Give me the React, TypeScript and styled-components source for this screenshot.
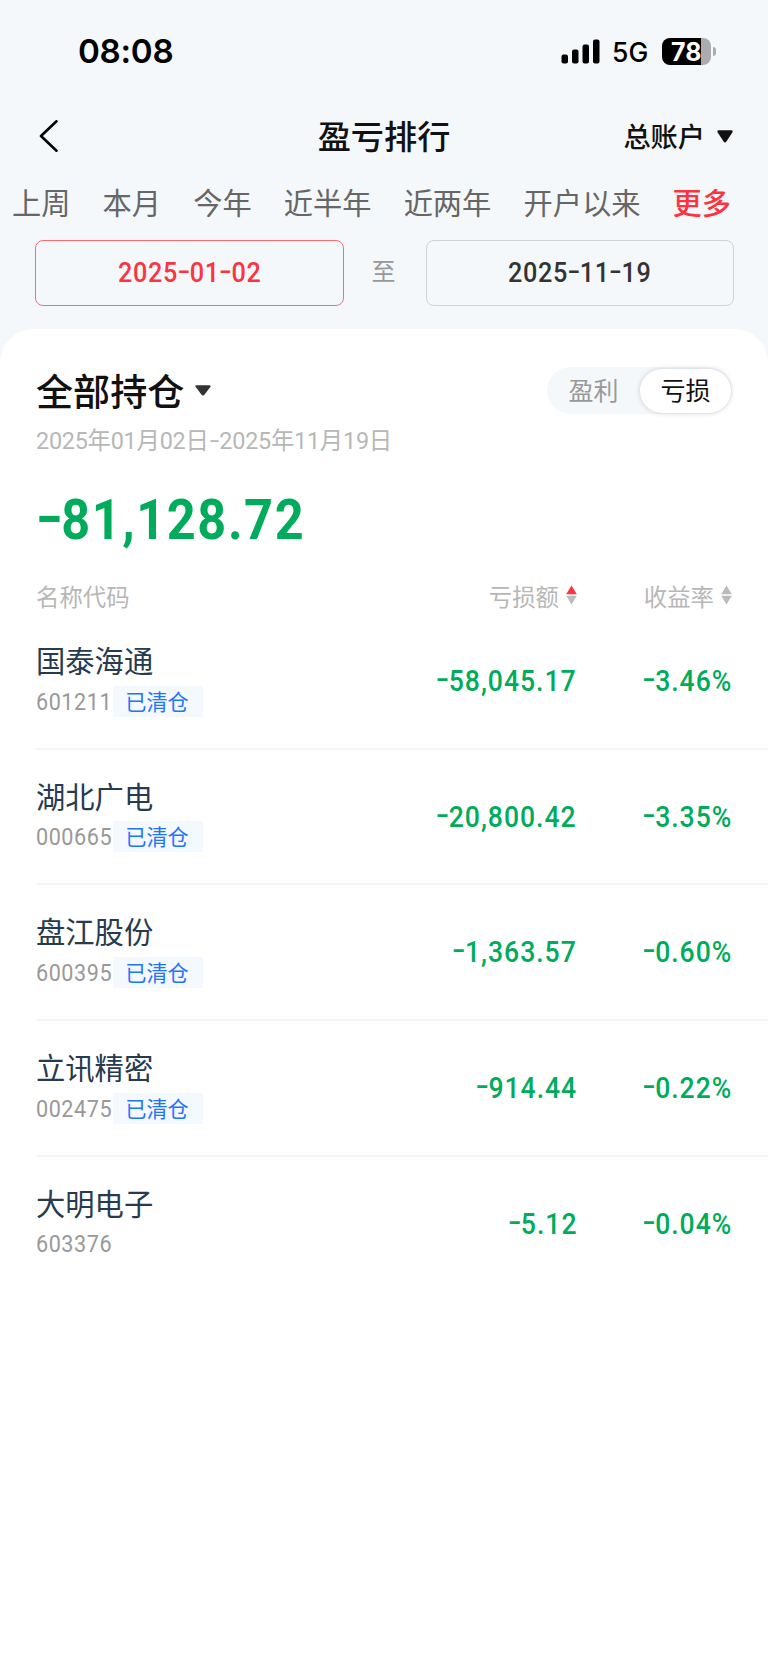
import React from 'react';
import styled, { createGlobalStyle } from 'styled-components';

const GlobalStyle = createGlobalStyle`
  *, *::before, *::after { box-sizing: border-box; }
  html, body { margin: 0; padding: 0; background: #fff; }
  body { font-family: Roboto, "Noto Sans CJK SC", sans-serif; color: #111; }
`;

const cjk = '"Noto Sans CJK SC", sans-serif';

const Screen = styled.div`
  width: 768px;
  height: 1663px;
  overflow: hidden;
  display: flex;
  flex-direction: column;
  background: #f4f8fb;
`;

const StatusBar = styled.div`
  height: 102px;
  padding: 0 52px 0 78px;
  display: flex;
  align-items: center;
  justify-content: space-between;
  font-family: Inter, sans-serif;
  color: #000;
`;

const Clock = styled.span`
  font-size: 33.2px;
  font-weight: 600;
  line-height: 40px;
  letter-spacing: -0.3px;
`;

const StatusIcons = styled.div`
  display: flex;
  align-items: center;
`;

const Network = styled.span`
  margin: 2px 0 0 12px;
  width: 50px;
  font-size: 26.5px;
  font-weight: 500;
  line-height: 30px;
`;

const Battery = styled.div`
  display: flex;
  align-items: center;
  gap: 2px;
`;

const BatteryBody = styled.div`
  width: 49px;
  height: 27px;
  border-radius: 8px;
  background: linear-gradient(to right, #000 39px, #acacae 39px);
  color: #fff;
  font-size: 25px;
  font-weight: 700;
  line-height: 28px;
  padding-left: 9px;
`;

const BatteryTip = styled.div`
  width: 3px;
  height: 9px;
  border-radius: 0 4px 4px 0;
  background: #acacae;
`;

const NavBar = styled.header`
  height: 68px;
  display: grid;
  grid-template-columns: 1fr auto 1fr;
  align-items: center;
  padding: 0 35px 0 38px;
  font-family: ${cjk};
`;

const Title = styled.h1`
  margin: 0;
  padding: 0 3px 2px 0;
  font-size: 33.2px;
  line-height: 48px;
  font-weight: 500;
  color: #111;
`;

const Account = styled.div`
  justify-self: end;
  display: flex;
  align-items: center;
  gap: 12px;
  font-size: 27.2px;
  line-height: 38px;
  font-weight: 500;
`;

const AccountLabel = styled.span`
  padding-bottom: 2px;
`;

const Tabs = styled.nav`
  height: 70px;
  padding-left: 12px;
  display: flex;
  gap: 32.1px;
  white-space: nowrap;
  font-family: ${cjk};
`;

const Tab = styled.span<{ $active?: boolean }>`
  font-size: 29.25px;
  line-height: 63px;
  font-weight: ${p => (p.$active ? 500 : 400)};
  color: ${p => (p.$active ? '#fb3440' : '#666')};
`;

const DateRange = styled.div`
  display: grid;
  grid-template-columns: 309px 82px 308px;
  padding-left: 35px;
  height: 89px;
`;

const DateBox = styled.div<{ $active?: boolean }>`
  height: 66px;
  display: flex;
  align-items: center;
  justify-content: center;
  padding-bottom: 2px;
  border: 1px solid ${p => (p.$active ? '#fa6b74' : '#d0d3d6')};
  border-radius: 8px;
  color: ${p => (p.$active ? '#fb3440' : '#333')};
`;

const To = styled.span`
  padding-right: 3px;
  font-family: ${cjk};
  font-size: 24px;
  line-height: 59px;
  text-align: center;
  color: #999;
`;

const NumText = styled.span<{ $size: number; $weight: number; $scale: number; $origin: string; $gap: number }>`
  display: inline-block;
  font-family: Roboto, sans-serif;
  font-size: ${p => p.$size}px;
  font-weight: ${p => p.$weight};
  letter-spacing: ${p => p.$gap}px;
  white-space: nowrap;
  transform: scaleX(${p => p.$scale});
  transform-origin: ${p => p.$origin} center;
`;

const Dash = styled.span`
  display: inline-block;
  width: 0.46em;
  text-align: center;
  letter-spacing: 0;
  transform: translateY(-0.06em) scaleX(1.45);
`;

const Card = styled.main`
  flex: 1;
  background: #fff;
  border-radius: 34px 34px 0 0;
  padding: 38px 0 0 36px;
`;

const CardHead = styled.div`
  display: flex;
  align-items: center;
  justify-content: space-between;
  height: 47px;
  padding-right: 36px;
  font-family: ${cjk};
`;

const Holdings = styled.h2`
  margin: 0;
  display: flex;
  align-items: center;
  gap: 11px;
  font-size: 37.1px;
  line-height: 50px;
  font-weight: 500;
`;

const HoldingsLabel = styled.span`
  padding-bottom: 1px;
`;

const Toggle = styled.div`
  width: 185px;
  height: 47px;
  border-radius: 24px;
  background: #f4f8fb;
  display: flex;
  align-items: center;
`;

const ToggleItem = styled.span<{ $active?: boolean }>`
  width: ${p => (p.$active ? 91 : 93)}px;
  height: 44px;
  border-radius: 22px;
  text-align: center;
  font-size: 25px;
  line-height: 40px;
  color: ${p => (p.$active ? '#111' : '#999')};
  background: ${p => (p.$active ? '#fff' : 'transparent')};
  box-shadow: ${p => (p.$active ? '0 0 5px rgba(60, 70, 80, 0.24)' : 'none')};
`;

const Period = styled.div`
  margin-top: 12px;
  font-size: 23.4px;
  line-height: 31px;
  letter-spacing: -0.25px;
  color: #b7b7b7;
`;

const Total = styled.div`
  margin-top: 23px;
  padding-left: 2px;
  height: 79px;
  line-height: 80px;
  color: #00ac5b;
`;

const columns = 'grid-template-columns: 340px 1fr 155px; display: grid; padding-right: 36px;';

const TableHead = styled.div`
  ${columns}
  height: 37px;
  margin-top: 18px;
  align-items: center;
  font-family: ${cjk};
  font-size: 23.4px;
  line-height: 34px;
  color: #b7b7b7;
`;

const SortHead = styled.div`
  display: flex;
  align-items: center;
  justify-content: flex-end;
  gap: 7px;

  svg { margin-bottom: 2px; }
`;

const Row = styled.div<{ $last?: boolean }>`
  ${columns}
  height: 135.7px;
  align-items: start;
  border-bottom: ${p => (p.$last ? 0 : 2)}px solid #f5f5f6;
`;

const Stock = styled.div`
  padding-top: 25px;
`;

const StockName = styled.div`
  font-family: ${cjk};
  font-size: 29.3px;
  line-height: 40px;
  color: #263a50;
`;

const StockMeta = styled.div`
  display: flex;
  align-items: center;
  height: 32px;
  margin-top: 6px;
  color: #999;
`;

const Code = styled.span`
  width: 77px;
  padding-top: 1px;
`;

const Badge = styled.span`
  width: 90px;
  height: 31px;
  padding-right: 2px;
  background: #f4f8ff;
  color: #2175fb;
  font-family: ${cjk};
  font-size: 21.2px;
  line-height: 29px;
  text-align: center;
`;

const Value = styled.div`
  text-align: right;
  color: #00ac5b;
  line-height: 40px;
  padding-top: 47px;
`;

const Figure = ({ text }: { text: string }) => (
  <>
    {text.split(/(-)/).map((part, i) => (part === '-' ? <Dash key={i}>-</Dash> : part))}
  </>
);

type NumProps = { text: string; size: number; weight?: number; scale?: number; origin?: string; gap?: number };

const Num = ({ text, size, weight = 500, scale = 0.9, origin = 'center', gap = 0 }: NumProps) => (
  <NumText $size={size} $weight={weight} $scale={scale} $origin={origin} $gap={gap}>
    <Figure text={text} />
  </NumText>
);

const Caret = ({ w, h, color }: { w: number; h: number; color: string }) => (
  <svg width={w} height={h} viewBox="0 0 16 12" preserveAspectRatio="none">
    <path d="M1.6 .3H14.4Q16.3 .6 15.3 2.2L9.4 10.7Q8 12.5 6.6 10.7L.7 2.2Q-.3 .6 1.6 .3Z" fill={color} />
  </svg>
);

const Sort = ({ up }: { up: string }) => (
  <svg width="11" height="20" viewBox="0 0 11 20">
    <path d="M5.5 .6L10.8 9.3H.2Z" fill={up} />
    <path d="M5.5 19.4L10.8 10.7H.2Z" fill="#bbb" />
  </svg>
);

const tabs = ['上周', '本月', '今年', '近半年', '近两年', '开户以来', '更多'];

const stocks = [
  { name: '国泰海通', code: '601211', cleared: true, loss: '-58,045.17', rate: '-3.46%' },
  { name: '湖北广电', code: '000665', cleared: true, loss: '-20,800.42', rate: '-3.35%' },
  { name: '盘江股份', code: '600395', cleared: true, loss: '-1,363.57', rate: '-0.60%' },
  { name: '立讯精密', code: '002475', cleared: true, loss: '-914.44', rate: '-0.22%' },
  { name: '大明电子', code: '603376', cleared: false, loss: '-5.12', rate: '-0.04%' },
];

export default function App() {
  return (
    <Screen>
      <GlobalStyle />
      <StatusBar>
        <Clock>08:08</Clock>
        <StatusIcons>
          <svg width="39" height="25" viewBox="0 0 39 25">
            <rect x="0.5" y="15.5" width="6.5" height="9" rx="2" />
            <rect x="11" y="10.5" width="6.5" height="14" rx="2" />
            <rect x="21.5" y="5.5" width="6.5" height="19" rx="2" />
            <rect x="32" y="0.5" width="6.5" height="24" rx="2" />
          </svg>
          <Network>5G</Network>
          <Battery>
            <BatteryBody>78</BatteryBody>
            <BatteryTip />
          </Battery>
        </StatusIcons>
      </StatusBar>
      <NavBar>
        <svg width="22" height="32" viewBox="0 0 22 32" fill="none" stroke="#000" strokeWidth="2.6" strokeLinecap="round" strokeLinejoin="round">
          <path d="M18.5 1.3L3 16L18.5 30.7" />
        </svg>
        <Title>盈亏排行</Title>
        <Account>
          <AccountLabel>总账户</AccountLabel>
          <Caret w={16} h={13} color="#111" />
        </Account>
      </NavBar>
      <Tabs>
        {tabs.map(t => (
          <Tab key={t} $active={t === '更多'}>{t}</Tab>
        ))}
      </Tabs>
      <DateRange>
        <DateBox $active><Num size={28} gap={0.8} text="2025-01-02" /></DateBox>
        <To>至</To>
        <DateBox><Num size={28} gap={0.8} text="2025-11-19" /></DateBox>
      </DateRange>
      <Card>
        <CardHead>
          <Holdings>
            <HoldingsLabel>全部持仓</HoldingsLabel>
            <Caret w={16} h={11} color="#333" />
          </Holdings>
          <Toggle>
            <ToggleItem>盈利</ToggleItem>
            <ToggleItem $active>亏损</ToggleItem>
          </Toggle>
        </CardHead>
        <Period><Figure text="2025年01月02日-2025年11月19日" /></Period>
        <Total><Num size={56} weight={700} origin="left" gap={1.8} text="-81,128.72" /></Total>
        <TableHead>
          <span>名称代码</span>
          <SortHead>亏损额<Sort up="#fb3440" /></SortHead>
          <SortHead>收益率<Sort up="#bbb" /></SortHead>
        </TableHead>
        {stocks.map((s, i) => (
          <Row key={s.code} $last={i === stocks.length - 1}>
            <Stock>
              <StockName>{s.name}</StockName>
              <StockMeta>
                <Code><Num size={24} weight={400} origin="left" gap={0.6} text={s.code} /></Code>
                {s.cleared && <Badge>已清仓</Badge>}
              </StockMeta>
            </Stock>
            <Value><Num size={29.5} origin="right" gap={1.1} text={s.loss} /></Value>
            <Value><Num size={29.5} origin="right" gap={1.1} text={s.rate} /></Value>
          </Row>
        ))}
      </Card>
    </Screen>
  );
}
